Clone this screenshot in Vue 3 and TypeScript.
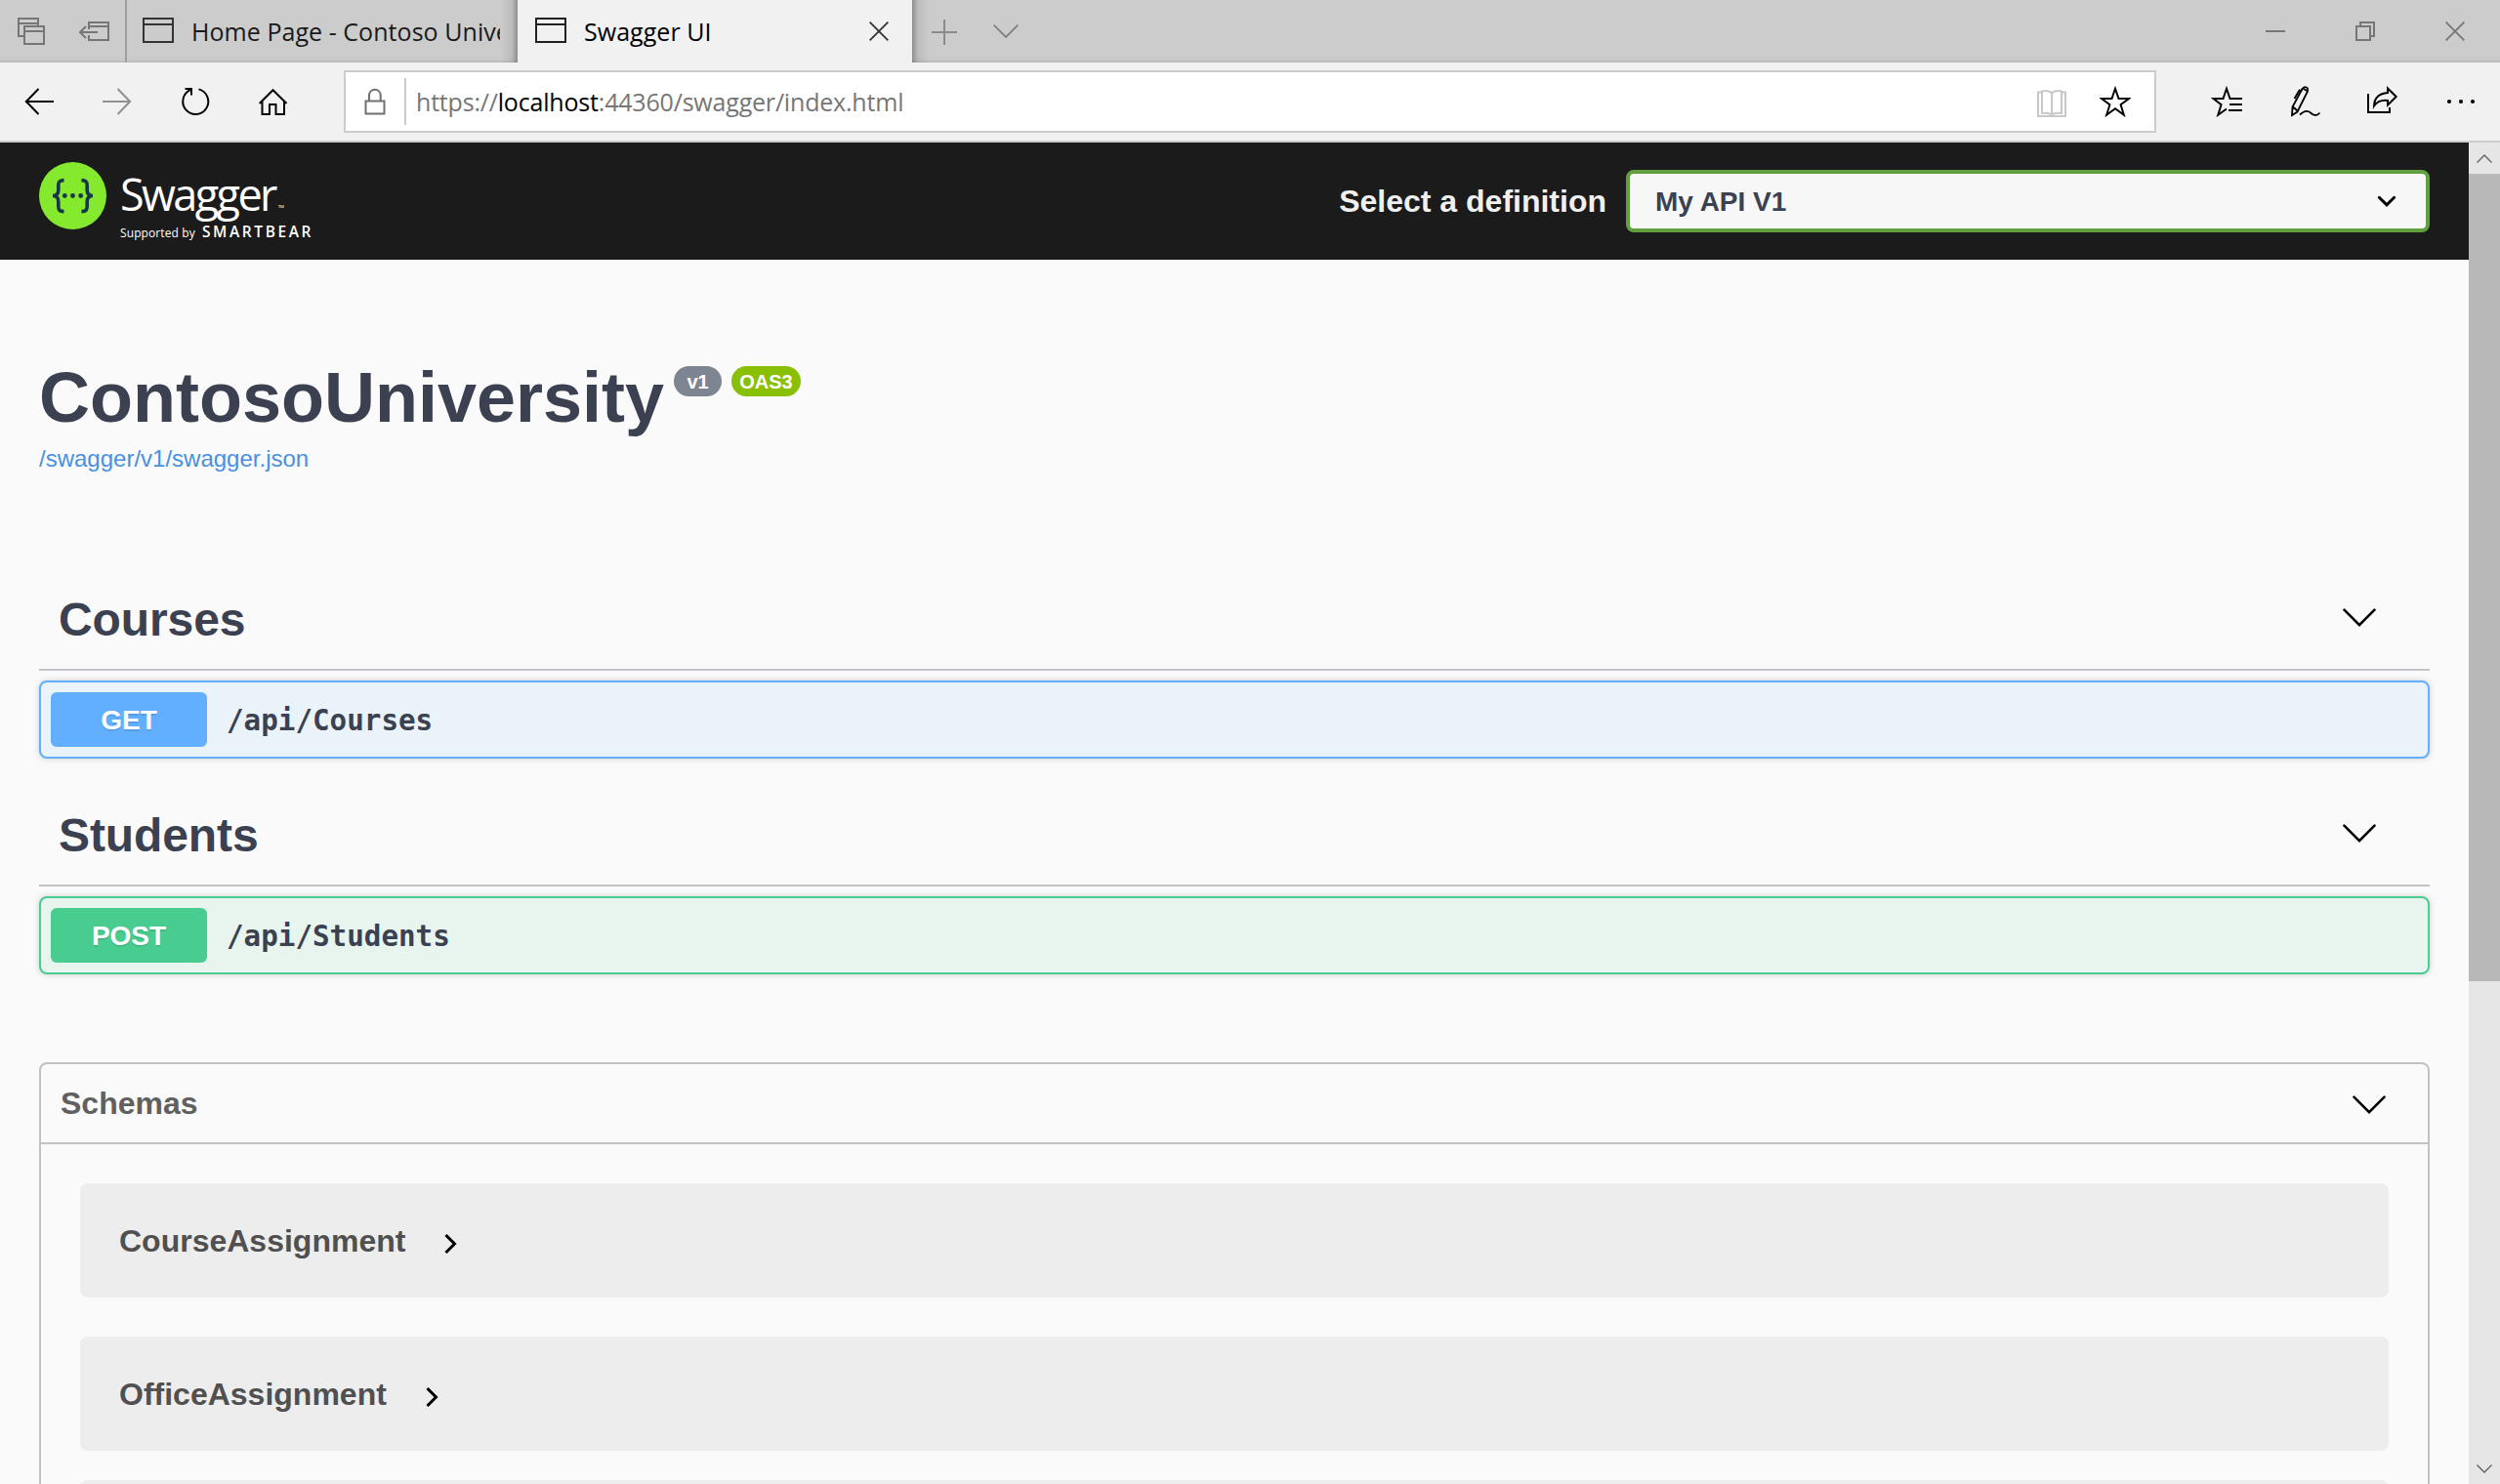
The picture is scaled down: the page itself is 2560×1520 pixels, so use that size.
<script setup lang="ts">
interface Operation {
  tag: string
  method: string
  path: string
}

const operations: Operation[] = [
  { tag: 'Courses', method: 'GET', path: '/api/Courses' },
  { tag: 'Students', method: 'POST', path: '/api/Students' },
]

const schemas: string[] = ['CourseAssignment', 'OfficeAssignment']
</script>

<template>
  <div class="browser">
    <div class="tabstrip">
      <div class="tab-tools">
        <svg class="i-aside" viewBox="18 18 28 28" fill="none" stroke="#767676" stroke-width="2">
          <path d="M24 37H19V19H39V26M19 24H39M25 27H45V45H25ZM25 32H45" />
        </svg>
        <svg class="i-set" viewBox="80 20 34 26" fill="none" stroke="#767676" stroke-width="2">
          <path d="M91 30V23H111V41H91V36M91 27H111M82 33H100M88 27L82 33L88 39" />
        </svg>
      </div>
      <div class="tab tab-idle">
        <svg class="i-page" viewBox="0 0 32 26" fill="none" stroke="#333" stroke-width="2">
          <path d="M1 1H31V25H1ZM1 7H31" />
        </svg>
        <span class="tab-title">Home Page - Contoso University</span>
      </div>
      <div class="tab tab-active">
        <svg class="i-page" viewBox="0 0 32 26" fill="none" stroke="#222" stroke-width="2">
          <path d="M1 1H31V25H1ZM1 7H31" />
        </svg>
        <span class="tab-title">Swagger UI</span>
        <svg class="i-close" viewBox="0 0 20 20" fill="none" stroke="#333" stroke-width="1.8">
          <path d="M.6 .6L19.4 19.4M19.4 .6L.6 19.4" />
        </svg>
      </div>
      <div class="tab-end">
        <svg class="i-plus" viewBox="0 0 26 26" fill="none" stroke="#8a8a8a" stroke-width="2">
          <path d="M0 13H26M13 0V26" />
        </svg>
        <svg class="i-more-tabs" viewBox="0 0 26 14" fill="none" stroke="#808080" stroke-width="1.8">
          <path d="M.7 .7L13 13L25.3 .7" />
        </svg>
      </div>
      <div class="window-controls">
        <svg viewBox="0 0 20 20" fill="none" stroke="#767676" stroke-width="2"><path d="M0 10H20" /></svg>
        <svg viewBox="0 0 20 20" fill="none" stroke="#767676" stroke-width="2">
          <path d="M1 5H15V19H1ZM5 5V1H19V15H15" />
        </svg>
        <svg viewBox="0 0 20 20" fill="none" stroke="#767676" stroke-width="1.8">
          <path d="M.6 .6L19.4 19.4M19.4 .6L.6 19.4" />
        </svg>
      </div>
    </div>

    <div class="toolbar">
      <div class="nav">
        <svg viewBox="24 88 32 32" fill="none" stroke="#000" stroke-width="2">
          <path d="M55 104H27M39.500 91L26.800 104L39.500 117" />
        </svg>
        <svg viewBox="104 88 32 32" fill="none" stroke="#919191" stroke-width="2">
          <path d="M105 104H133M120.500 91L133.200 104L120.500 117" />
        </svg>
        <svg viewBox="184 88 32 32" fill="none" stroke="#000" stroke-width="2">
          <path d="M203.500 91.400A13 13 0 1 1 194.800 92.200M189.500 91H196V97.500" />
        </svg>
        <svg viewBox="264 88 32 32" fill="none" stroke="#000" stroke-width="2">
          <path d="M265.700 106L279.500 92.200L293.500 106M268.500 104V117H276V107H282.500V117H291V104" />
        </svg>
      </div>
      <div class="address">
        <svg class="i-lock" viewBox="373 90 22 28" fill="none" stroke="#707070" stroke-width="2">
          <path d="M374.500 103.500H393.500V116.500H374.500ZM378 103V97.500A5.800 5.800 0 0 1 389.700 97.500V103" />
        </svg>
        <div class="divider"></div>
        <div class="url">https://<span class="host">localhost</span>:44360/swagger/index.html</div>
        <svg class="i-book" viewBox="2085 88 32 32" fill="none" stroke="#c8c8c8" stroke-width="2">
          <path d="M2091 94.500H2087V119H2115V94.500H2111M2101 95.500Q2098 92 2091 93.500V116Q2098 115 2101 117.500Q2104 115 2111 116V93.500Q2104 92 2101 95.500ZM2101 95.500V117" />
        </svg>
        <svg class="i-star" viewBox="2150 88 32 32" fill="none" stroke="#000" stroke-width="2">
          <path d="M2166 90.800L2169.500 101H2180L2171.600 107.200L2174.800 117.700L2166 111.300L2157.200 117.700L2160.400 107.200L2152 101H2162.500Z" />
        </svg>
      </div>
      <div class="actions">
        <svg viewBox="2264 88 32 32" fill="none" stroke="#000" stroke-width="2">
          <path d="M2296 101H2283.500L2280 90.800L2276.500 101H2266.500L2274.500 107.200L2271.300 117.700L2280 111.500M2283 107H2296M2282 113H2296" />
        </svg>
        <svg viewBox="2344 88 32 32" fill="none" stroke="#000" stroke-width="1.8">
          <path d="M2347 118L2347.500 109.500L2357.500 91Q2360 87.500 2363 90.500L2363 93.500L2352.500 114.500ZM2347.500 109L2352.500 113.500M2349.500 101L2354.500 92.500L2357.500 93M2358 90.500L2362.800 93.200M2355 117.500Q2361.500 111.500 2366 115.500Q2371 120.500 2375.500 115.500" />
        </svg>
        <svg viewBox="2424 88 32 32" fill="none" stroke="#000" stroke-width="2">
          <path d="M2425 96V115H2447V110M2445 90.500L2453.700 99L2445 107.500V103Q2435.500 102 2431 108.500Q2431.500 96 2445 95Z" />
        </svg>
        <svg viewBox="2504 88 32 32" fill="#000">
          <circle cx="2508" cy="104" r="2.100" /><circle cx="2520" cy="104" r="2.100" /><circle cx="2532" cy="104" r="2.100" />
        </svg>
      </div>
    </div>

    <div class="viewport">
      <div class="page">
        <header class="topbar">
          <div class="brand">
            <svg class="mark" viewBox="0 0 69 69">
              <circle cx="34.500" cy="34.500" r="34.500" fill="#85ea2d" />
              <g fill="none" stroke="#173647" stroke-width="3.600">
                <path d="M25.500 18.600C20.500 18.600 19.800 20.500 19.800 24V28.500C19.800 32 18 34.500 14 34.500C18 34.500 19.800 37 19.800 40.500V45C19.800 48.800 20.500 50.600 25.500 50.600" />
                <path d="M43.500 18.600C48.500 18.600 49.200 20.500 49.200 24V28.500C49.200 32 51 34.500 55 34.500C51 34.500 49.200 37 49.200 40.500V45C49.200 48.800 48.500 50.600 43.500 50.600" />
              </g>
              <g fill="#173647"><circle cx="26.300" cy="34.500" r="2.400" /><circle cx="34.500" cy="34.500" r="2.400" /><circle cx="42.700" cy="34.500" r="2.400" /></g>
            </svg>
            <div class="wordmark">
              <div class="name">Swagger<span class="tm">™</span></div>
              <div class="byline"><span class="supported">Supported by</span><span class="smartbear">SMARTBEAR</span></div>
            </div>
          </div>
          <div class="definition">
            <span class="definition-label">Select a definition</span>
            <div class="select">
              <span>My API V1</span>
              <svg viewBox="0 0 20 13" fill="none" stroke="#000" stroke-width="3" stroke-linecap="round">
                <path d="M2.300 2.300L10 9.800L17.700 2.300" />
              </svg>
            </div>
          </div>
        </header>

        <main class="content">
          <div class="info">
            <h1 class="title">
              <span class="title-text">ContosoUniversity</span>
              <span class="pill">v1</span>
              <span class="pill pill-oas">OAS3</span>
            </h1>
            <a class="spec">/swagger/v1/swagger.json</a>
          </div>

          <section v-for="op in operations" :key="op.tag" class="tag-section">
            <h2 class="tag">
              <span>{{ op.tag }}</span>
              <svg class="chevron" viewBox="0 0 34 20" fill="none" stroke="#000" stroke-width="2.600" stroke-linecap="round">
                <path d="M1.500 1.700L17 17.200L32.500 1.700" />
              </svg>
            </h2>
            <div class="op" :class="'op-' + op.method.toLowerCase()">
              <span class="method">{{ op.method }}</span>
              <span class="path">{{ op.path }}</span>
            </div>
          </section>

          <section class="models">
            <h4 class="models-title">
              <span>Schemas</span>
              <svg class="chevron" viewBox="0 0 34 20" fill="none" stroke="#000" stroke-width="2.600" stroke-linecap="round">
                <path d="M1.500 1.700L17 17.200L32.500 1.700" />
              </svg>
            </h4>
            <div class="model-list">
              <div v-for="name in schemas" :key="name" class="model">
                <span>{{ name }}</span>
                <svg class="arrow" viewBox="0 0 14 20" fill="none" stroke="#000" stroke-width="3">
                  <path d="M1.500 1L10.500 10L1.500 19" />
                </svg>
              </div>
              <div class="model model-cut"></div>
            </div>
          </section>
        </main>
      </div>

      <div class="scrollbar">
        <div class="sb-button">
          <svg viewBox="0 0 16 9" fill="none" stroke="#606060" stroke-width="1.300"><path d="M.5 8.500L8 1L15.500 8.500" /></svg>
        </div>
        <div class="thumb"></div>
        <div class="track"></div>
        <div class="sb-button">
          <svg viewBox="0 0 16 9" fill="none" stroke="#606060" stroke-width="1.300"><path d="M.5 .5L8 8L15.500 .5" /></svg>
        </div>
      </div>
    </div>
  </div>
</template>

<style>
body {
  overflow: hidden;
}
</style>

<style scoped>
.browser {
  width: 2560px;
  height: 1520px;
  display: flex;
  flex-direction: column;
  overflow: hidden;
  background: #fafafa;
  font-family: "Liberation Sans", Arial, sans-serif;
}
.browser * {
  box-sizing: border-box;
}
svg {
  display: block;
  flex: none;
}

/* tab strip */
.tabstrip {
  height: 64px;
  flex: none;
  display: flex;
  background: linear-gradient(#ccc 58px, #c6c6c6 62px, #b4b4b4);
  font-family: "Open Sans", "Noto Sans", sans-serif;
  font-size: 25px;
}
.tab-tools {
  width: 130px;
  display: flex;
  align-items: flex-start;
  padding: 18px 0 0 18px;
  border-right: 2px solid #9e9e9e;
}
.i-aside {
  width: 28px;
  height: 28px;
}
.i-set {
  width: 34px;
  height: 26px;
  margin: 2px 0 0 34px;
}
.tab {
  display: flex;
  align-items: flex-start;
  padding-top: 18px;
}
.tab-idle {
  width: 400px;
  padding-left: 16px;
  color: #1a1a1a;
  background: linear-gradient(to left, rgba(0, 0, 0, 0.3), rgba(0, 0, 0, 0.08) 6px, transparent 18px);
}
.i-page {
  width: 32px;
  height: 26px;
}
.tab-title {
  flex: none;
  margin: -5px 0 0 18px;
  line-height: 38px;
  white-space: nowrap;
  overflow: hidden;
  letter-spacing: 0.05px;
}
.tab-idle .tab-title {
  width: 316px;
}
.tab-active {
  width: 404px;
  padding-left: 18px;
  padding-right: 24px;
  background: #f1f1f1;
  color: #000;
}
.i-close {
  width: 20px;
  height: 20px;
  margin: 4px 0 0 auto;
}
.tab-end {
  width: 160px;
  display: flex;
  align-items: flex-start;
  padding: 20px 0 0 20px;
  background: linear-gradient(to right, rgba(0, 0, 0, 0.3), rgba(0, 0, 0, 0.08) 6px, transparent 18px);
}
.i-plus {
  width: 26px;
  height: 26px;
}
.i-more-tabs {
  width: 26px;
  height: 14px;
  margin: 5px 0 0 37px;
}
.window-controls {
  display: flex;
  gap: 72px;
  margin-left: auto;
  padding: 22px 36px 0 0;
}
.window-controls svg {
  width: 20px;
  height: 20px;
}

/* toolbar */
.toolbar {
  height: 82px;
  flex: none;
  display: flex;
  align-items: flex-start;
  background: #f1f1f1;
  border-bottom: 2px solid #ccc;
}
.nav {
  width: 352px;
  display: flex;
  gap: 48px;
  padding: 24px 0 0 24px;
}
.nav svg,
.actions svg,
.i-book,
.i-star {
  width: 32px;
  height: 32px;
}
.address {
  width: 1856px;
  height: 64px;
  margin-top: 8px;
  display: flex;
  align-items: center;
  border: 2px solid #ccc;
  background: #fff;
  padding: 0 24px 0 19px;
}
.i-lock {
  width: 22px;
  height: 28px;
}
.divider {
  width: 2px;
  height: 48px;
  margin-left: 19px;
  background: #ccc;
}
.url {
  margin-left: 10px;
  margin-right: auto;
  font: 25px/40px "Open Sans", "Noto Sans", sans-serif;
  color: #767676;
  white-space: nowrap;
  letter-spacing: -0.19px;
}
.host {
  color: #000;
}
.i-star {
  margin-left: 33px;
}
.actions {
  display: flex;
  gap: 48px;
  margin-left: auto;
  padding: 24px 24px 0 0;
}

/* page */
.viewport {
  flex: 1;
  min-height: 0;
  display: flex;
}
.page {
  width: 2528px;
  overflow: hidden;
}
.topbar {
  height: 120px;
  display: flex;
  justify-content: space-between;
  background: #1b1b1b;
  padding: 0 40px;
}
.brand {
  display: flex;
  padding-top: 20px;
}
.mark {
  width: 69px;
  height: 69px;
}
.wordmark {
  margin-left: 14px;
  padding-top: 5px;
  color: #fff;
  font-family: "Open Sans", "Noto Sans", sans-serif;
}
.name {
  font-size: 45px;
  line-height: 56px;
  height: 56px;
  letter-spacing: -2.6px;
  font-weight: 400;
  white-space: nowrap;
}
.tm {
  font-size: 8px;
  letter-spacing: 0;
  margin-left: 3px;
}
.byline {
  display: flex;
  align-items: baseline;
  line-height: 20px;
  white-space: nowrap;
}
.supported {
  width: 84px;
  font-size: 12px;
  letter-spacing: 0.1px;
}
.smartbear {
  font-size: 15.500px;
  font-weight: 600;
  letter-spacing: 2.600px;
}
.definition {
  display: flex;
  align-items: center;
}
.definition-label {
  font-size: 32px;
  font-weight: 700;
  color: #f0f0f0;
  white-space: nowrap;
}
.select {
  width: 823px;
  height: 64px;
  margin-left: 20px;
  padding: 0 30px 0 26px;
  display: flex;
  align-items: center;
  justify-content: space-between;
  border: 4px solid #62a03f;
  border-radius: 8px;
  background: #f7f7f7;
  color: #3b4151;
  font-size: 28px;
  font-weight: 700;
}
.select span {
  padding-top: 2px;
}
.select svg {
  width: 20px;
  height: 13px;
}
.content {
  padding: 0 40px;
  color: #3b4151;
}
.info {
  height: 329px;
  padding-top: 101px;
}
.title {
  margin: 0;
  height: 80px;
  display: flex;
  align-items: flex-start;
}
.title-text {
  width: 650px;
  font-size: 72px;
  line-height: 80px;
}
.pill {
  width: 49px;
  height: 31px;
  margin-top: 8px;
  border-radius: 16px;
  background: #7d8492;
  color: #fff;
  font-size: 20px;
  line-height: 32px;
  text-align: center;
}
.pill-oas {
  width: 71px;
  margin-left: 10px;
  background: #89bf04;
}
.spec {
  display: block;
  margin-top: 8px;
  font-size: 24px;
  line-height: 30px;
  color: #4990e2;
}
.tag-section {
  height: 221px;
}
.tag {
  margin: 0 0 10px;
  height: 92px;
  display: flex;
  align-items: center;
  justify-content: space-between;
  padding: 0 55px 10px 20px;
  border-bottom: 2px solid #c1c1c8;
  font-size: 48px;
  line-height: 60px;
  letter-spacing: -0.1px;
}
.chevron {
  width: 34px;
  height: 20px;
}
.tag .chevron {
  margin-top: -4px;
}
.op {
  height: 80px;
  display: flex;
  align-items: center;
  padding: 0 10px;
  border: 2px solid;
  border-radius: 8px;
  box-shadow: 0 0 6px rgba(0, 0, 0, 0.19);
}
.method {
  width: 160px;
  height: 56px;
  border-radius: 6px;
  color: #fff;
  font-size: 28px;
  font-weight: 700;
  line-height: 58px;
  text-align: center;
  text-shadow: 0 2px 0 rgba(0, 0, 0, 0.1);
}
.path {
  margin-left: 20px;
  padding-top: 2px;
  font: 700 29.240px/40px "DejaVu Sans Mono", monospace;
}
.op-get {
  border-color: #61affe;
  background: #eaf2fa;
}
.op-get .method {
  background: #61affe;
}
.op-post {
  border-color: #49cc90;
  background: #e8f5ee;
}
.op-post .method {
  background: #49cc90;
}
.models {
  margin-top: 51px;
  height: 600px;
  border: 2px solid #c1c1c8;
  border-radius: 8px;
}
.models-title {
  margin: 0;
  height: 82px;
  display: flex;
  align-items: center;
  justify-content: space-between;
  padding: 0 43px 0 20px;
  border-bottom: 2px solid #c1c1c8;
  font-size: 32px;
  color: #606060;
}
.models-title .chevron {
  margin-top: 4px;
}
.model-list {
  padding: 40px 40px 0;
}
.model {
  height: 117px;
  margin-bottom: 40px;
  display: flex;
  align-items: center;
  padding-left: 40px;
  border-radius: 8px;
  background: #ededed;
  font-size: 32px;
  font-weight: 700;
  color: #505050;
}
.model span {
  padding-top: 2px;
}
.model-cut {
  margin-top: -10px;
}
.arrow {
  width: 14px;
  height: 20px;
  margin: 6px 0 0 40px;
}

/* scrollbar */
.scrollbar {
  width: 32px;
  display: flex;
  flex-direction: column;
  background: #e6e6e6;
}
.sb-button {
  height: 32px;
  flex: none;
  display: flex;
  align-items: center;
  justify-content: center;
}
.sb-button svg {
  width: 16px;
  height: 9px;
}
.thumb {
  height: 827px;
  flex: none;
  background: #b8b8b8;
}
.track {
  flex: 1;
}
</style>
